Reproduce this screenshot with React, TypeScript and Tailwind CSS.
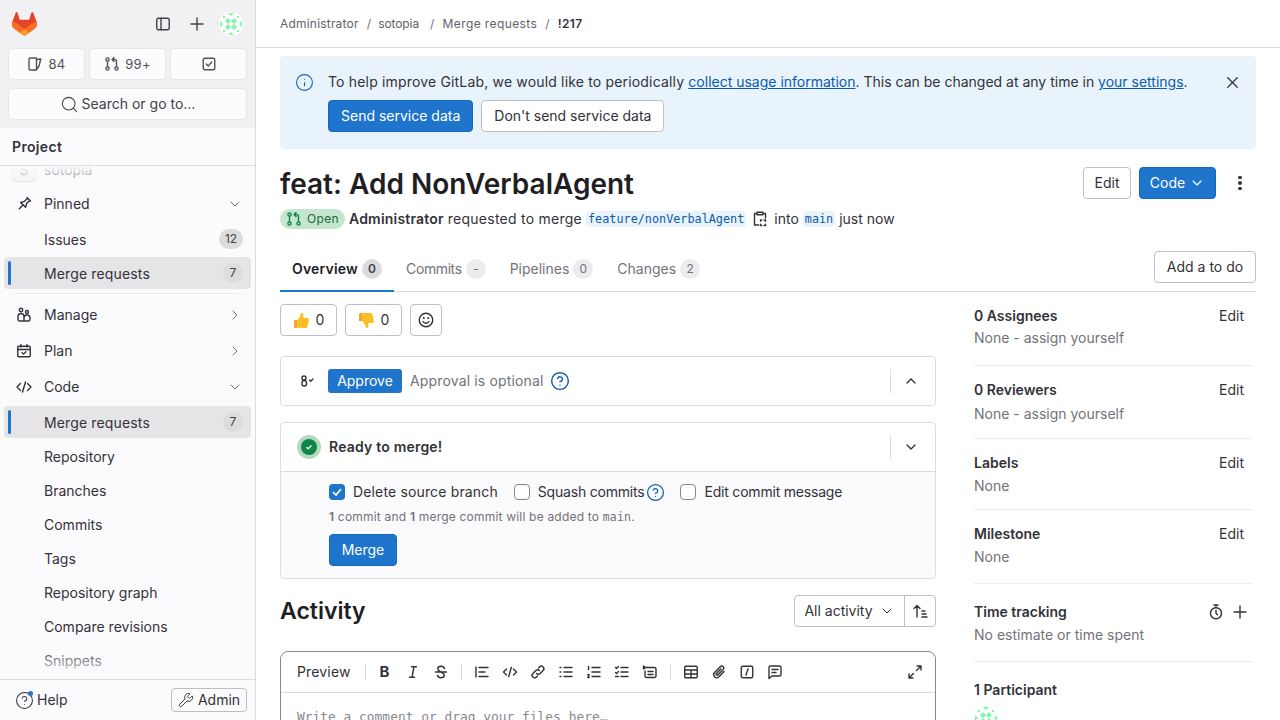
import type { ReactNode } from "react";
import { ChevronDown, ChevronRight, CircleHelp, Info, Search, Wrench, X } from "lucide-react";

const MONO = "font-['DejaVu_Sans_Mono',monospace]";

// 16px stroke icon, same grid as the GitLab icon set
const Ico = ({ children, className = "" }: { children: ReactNode; className?: string }) => (
  <svg viewBox="0 0 16 16" fill="none" stroke="currentColor" strokeWidth="1.4" strokeLinecap="round" strokeLinejoin="round" className={`h-4 w-4 shrink-0 ${className}`}>
    {children}
  </svg>
);

const MergeIcon = ({ className = "" }: { className?: string }) => (
  <Ico className={className}>
    <circle cx="3.5" cy="3.5" r="1.6" />
    <circle cx="3.5" cy="12.5" r="1.6" />
    <circle cx="12.5" cy="12.5" r="1.6" />
    <path d="M3.5 5.1v5.8M12.5 10.9V5.5a2 2 0 0 0-2-2H8M10 1.5l-2 2 2 2" />
  </Ico>
);

const PlusIcon = () => (
  <Ico>
    <path d="M8 2v12M2 8h12" />
  </Ico>
);

const Logo = () => (
  <svg viewBox="0 0 25 24" className="h-6 w-[25px]">
    <path d="m24.507 9.5-.034-.09L21.082.562a.896.896 0 0 0-1.694.091l-2.29 7.01H7.825L5.535.653a.898.898 0 0 0-1.694-.09L.451 9.411.416 9.5a6.297 6.297 0 0 0 2.09 7.278l.012.01.03.022 5.16 3.867 2.56 1.935 1.554 1.176a1.051 1.051 0 0 0 1.268 0l1.555-1.176 2.56-1.935 5.197-3.89.014-.01A6.297 6.297 0 0 0 24.507 9.5Z" fill="#E24329" />
    <path d="m24.507 9.5-.034-.09a11.44 11.44 0 0 0-4.56 2.051l-7.447 5.632 4.742 3.584 5.197-3.89.014-.01A6.297 6.297 0 0 0 24.507 9.5Z" fill="#FC6D26" />
    <path d="m7.707 20.677 2.56 1.935 1.555 1.176a1.051 1.051 0 0 0 1.268 0l1.555-1.176 2.56-1.935-4.743-3.584-4.755 3.584Z" fill="#FCA326" />
    <path d="M5.01 11.461a11.43 11.43 0 0 0-4.56-2.05L.416 9.5a6.297 6.297 0 0 0 2.09 7.278l.012.01.03.022 5.16 3.867 4.745-3.584-7.444-5.632Z" fill="#FC6D26" />
  </svg>
);

const Identicon = () => (
  <svg viewBox="0 0 24 24" className="h-6 w-6 shrink-0 rounded-full bg-white">
    <g fill="#7ff7a8">
      <path d="M9 6l3 3-3 3-3-3zM15 6l3 3-3 3-3-3zM9 12l3 3-3 3-3-3zM15 12l3 3-3 3-3-3z" />
      <path d="M9 1h6l-3 3zM9 23h6l-3-3zM1 9v6l3-3zM23 9v6l-3-3z" />
      <path d="M4 4h2v2H4zM18 4h2v2h-2zM4 18h2v2H4zM18 18h2v2h-2z" />
    </g>
  </svg>
);

const TopChip = ({ children }: { children: ReactNode }) => (
  <div className="flex h-8 flex-1 items-center justify-center gap-[5px] rounded border border-[#e6e6e9] bg-[#fbfafd] text-[13px] tracking-wide text-[#535158]">{children}</div>
);

const NavItem = ({ label, count, active }: { label: string; count?: number; active?: boolean }) => (
  <div className={`relative mx-1 mb-0.5 flex h-8 w-[247px] items-center justify-between rounded pl-10 pr-2 ${active ? "bg-[#e5e5e8]" : ""}`}>
    {active && <span className="absolute left-1 top-1 h-6 w-[3px] rounded bg-[#1f75cb]" />}
    <span className={`pt-px ${active ? "tracking-[0.14px]" : ""}`}>{label}</span>
    {count !== undefined && <span className={`flex h-5 items-center justify-center rounded-full bg-[#dcdcde] text-xs text-[#434248] ${count > 9 ? "w-6" : "w-5"}`}>{count}</span>}
  </div>
);

const NavSection = ({ icon, label, open, gap }: { icon: ReactNode; label: string; open?: boolean; gap: string }) => (
  <div className={`mx-1 flex h-8 w-[247px] items-center gap-3 px-3 pr-2 ${gap}`}>
    {icon}
    <span className="flex-1">{label}</span>
    {open ? <ChevronDown size={16} className="text-[#737278]" strokeWidth={1.5} /> : <ChevronRight size={16} className="text-[#737278]" strokeWidth={1.5} />}
  </div>
);

const Sidebar = () => (
  <aside className="flex h-[720px] w-64 shrink-0 flex-col border-r border-[#dcdcde] bg-[#fbfafd] text-sm text-[#333238]">
    <div className="flex h-32 shrink-0 flex-col bg-[#f1f1f3] px-2">
      <div className="flex h-12 shrink-0 items-center pl-1 pr-1">
        <Logo />
        <div className="ml-auto flex items-center gap-[18px] text-[#434248]">
          <Ico>
            <rect x="1.75" y="2.25" width="12.5" height="11.5" rx="1.5" />
            <path d="M6 2.25v11.5" />
          </Ico>
          <PlusIcon />
          <div className="-ml-1">
            <Identicon />
          </div>
        </div>
      </div>
      <div className="flex gap-1">
        <TopChip>
          <Ico>
            <path d="M2 3.25C2 2.5 2.5 2 3.25 2H9.5v12H3.25C2.5 14 2 13.5 2 12.75zM10 3.5 13.75 3 12 10l-2 3" />
          </Ico>
          84
        </TopChip>
        <TopChip>
          <MergeIcon />
          99+
        </TopChip>
        <TopChip>
          <Ico>
            <rect x="2.25" y="2.25" width="11.5" height="11.5" rx="1.5" />
            <path d="M5.25 8l2 2 3.5-4" />
          </Ico>
        </TopChip>
      </div>
      <div className="mt-2 flex h-8 items-center justify-center gap-[3px] rounded border border-[#e6e6e9] bg-[#fbfafd] text-[#434248]">
        <Search size={19} strokeWidth={1.3} />
        Search or go to…
      </div>
    </div>

    <div className="flex h-[38px] shrink-0 items-center border-b border-[#dcdcde] px-3 font-semibold tracking-wide">Project</div>

    <div className="relative flex-1 overflow-hidden">
      <div className="-mt-[12px]">
        <div className="mb-[2px] flex h-8 items-center gap-2 px-3">
          <span className="flex h-6 w-6 items-center justify-center rounded border border-[#dcdcde] bg-[#f1f1f3] text-[#737278]">S</span>
          <span>sotopia</span>
        </div>
        <NavSection
          label="Pinned"
          open
          gap="mb-[3px]"
          icon={
            <Ico className="rotate-45">
              <path d="M5.5 1.25h5M6.5 1.25v4.5l-2 3.5h7l-2-3.5v-4.5M8 9.25v5.5" />
            </Ico>
          }
        />
        <NavItem label="Issues" count={12} />
        <NavItem label="Merge requests" count={7} active />
        {/* margins collapse with the row above, so mt here is the whole gap */}
        <div className="mx-4 mb-[5px] mt-1 h-px bg-[#ececef]" />
        <NavSection
          label="Manage"
          gap="mb-1"
          icon={
            <Ico>
              <circle cx="5" cy="3" r="1.75" />
              <path d="M2 9.5a3 3 0 0 1 6 0V14H3.5A1.5 1.5 0 0 1 2 12.5zM8 14h4.5a1.5 1.5 0 0 0 1.5-1.5V11a3 3 0 0 0-6 0" />
              <circle cx="11" cy="5" r="1.5" />
            </Ico>
          }
        />
        <NavSection
          label="Plan"
          gap="mb-1"
          icon={
            <Ico>
              <rect x="1.75" y="3.25" width="12.5" height="10.5" rx="1" />
              <path d="M1.75 6.5h12.5M5 1.5v2.5M11 1.5v2.5M6 9.75l1.5 1.25L10 8.75" />
            </Ico>
          }
        />
        <NavSection
          label="Code"
          open
          gap="mb-[3px]"
          icon={
            <Ico>
              <path d="M4.5 4.5 1 8l3.5 3.5M11.5 4.5 15 8l-3.5 3.5M9.5 3l-3 10" />
            </Ico>
          }
        />
        <NavItem label="Merge requests" count={7} active />
        <NavItem label="Repository" />
        <NavItem label="Branches" />
        <NavItem label="Commits" />
        <NavItem label="Tags" />
        <NavItem label="Repository graph" />
        <NavItem label="Compare revisions" />
        <NavItem label="Snippets" />
      </div>
      <div className="absolute inset-x-0 top-0 h-6 bg-gradient-to-b from-[#fbfafd] to-transparent" />
      <div className="absolute inset-x-0 bottom-0 h-8 bg-gradient-to-t from-[#fbfafd] to-transparent" />
    </div>

    <div className="flex h-[41px] shrink-0 items-center justify-between border-t border-[#dcdcde] pl-4 pr-2">
      <div className="relative flex items-center gap-[3px]">
        <CircleHelp size={19} strokeWidth={1.3} className="-ml-px" />
        <span className="absolute left-[12px] top-[1px] h-[5px] w-[5px] rounded-full bg-[#1f75cb]" />
        Help
      </div>
      <div className="flex h-6 w-[76px] items-center justify-center gap-1 rounded border border-[#bfbfc3]">
        <Wrench size={16} strokeWidth={1.4} />
        Admin
      </div>
    </div>
  </aside>
);

const Btn = ({ children, primary, className = "" }: { children: ReactNode; primary?: boolean; className?: string }) => (
  <div className={`flex h-8 items-center justify-center rounded border px-3 ${primary ? "border-[#1068bf] bg-[#1f75cb] text-white" : "border-[#bfbfc3] bg-white text-[#333238]"} ${className}`}>{children}</div>
);

const Tab = ({ label, count, active, track = "" }: { label: string; count: string; active?: boolean; track?: string }) => (
  <div className={`-mb-px flex h-[44px] items-center gap-1 border-b-2 px-3 ${active ? "border-[#1f75cb] font-semibold text-[#1f1e24]" : "border-transparent text-[#737278]"}`}>
    <span className={track}>{label}</span>
    <span className={`flex h-5 w-5 items-center justify-center rounded-full text-xs ${active ? "bg-[#dcdcde] font-semibold text-[#434248]" : "bg-[#ececef] font-normal text-[#737278]"}`}>{count}</span>
  </div>
);

const Thumb = ({ down }: { down?: boolean }) => (
  <svg viewBox="0 0 16 16" className={`h-[17px] w-[17px] ${down ? "rotate-180 -scale-x-100" : ""}`}>
    <path d="M1 7.5h3.2V15H2.2A1.2 1.2 0 0 1 1 13.8z" fill="#f4a321" />
    <path d="M4.2 7.5 7.2 3V1.6C7.2.6 9.8.6 9.8 3v2.6h3.6c1.5 0 1.9 1.1 1.5 2.2L13.6 13.6c-.3 1-1 1.4-2 1.4H6c-1 0-1.8-.4-1.8-.8z" fill="#fbbf24" />
  </svg>
);

const ToolSep = ({ className = "mx-[6px]" }: { className?: string }) => <span className={`h-4 w-px bg-[#dcdcde] ${className}`} />;

const Tool = ({ children }: { children: ReactNode }) => <div className="flex h-7 w-7 items-center justify-center text-[#333238]">{children}</div>;

const Toolbar = () => (
  <div className="flex h-[41px] items-center border-b border-[#dcdcde] pl-2 pr-[12px]">
    <span className="px-2 tracking-[0.15px]">Preview</span>
    <ToolSep />
    <div className="-ml-px flex">
      <Tool><span className="text-[15px] font-bold">B</span></Tool>
      <Tool><Ico><path d="M6.5 2.75h5M4.5 13.25h5M9 2.75l-2 10.5" /></Ico></Tool>
      <Tool><Ico><path d="M11.5 4.5C11 3 9.8 2.25 8 2.25c-2 0-3.25 1-3.25 2.5S6 7 8 8s3.25 1.75 3.25 3.25S10 13.75 8 13.75c-1.8 0-3-.75-3.5-2.25M2.5 8h11" /></Ico></Tool>
    </div>
    <ToolSep />
    <Tool><Ico><path d="M2 3v10M5 3.5h9M5 8h6M5 12.5h9" /></Ico></Tool>
    <Tool><Ico><path d="M4.5 5 1.5 8l3 3M11.5 5l3 3-3 3M9.3 3.5l-2.6 9" /></Ico></Tool>
    <Tool><Ico><path d="M6.5 9.5a2.5 2.5 0 0 0 3.6 0l3-3a2.5 2.5 0 0 0-3.6-3.6l-1 1M9.5 6.5a2.5 2.5 0 0 0-3.6 0l-3 3a2.5 2.5 0 0 0 3.6 3.6l1-1" /></Ico></Tool>
    <Tool><Ico><path d="M6 3.5h8M6 8h8M6 12.5h8M2 3.5h1M2 8h1M2 12.5h1" /></Ico></Tool>
    <Tool><Ico><path d="M6 3.5h8M6 8h8M6 12.5h8M2.5 2.5v3M1.75 10.75h1.5L1.75 13.5h1.5" /></Ico></Tool>
    <Tool><Ico><path d="M7 3.5h7M7 8h7M7 12.5h7M1.5 3.5l1 1 2-2M1.5 8.5l1 1 2-2M1.5 12.5h3" /></Ico></Tool>
    <Tool><Ico><path d="M3.5 3.5h9a1.5 1.5 0 0 1 1.5 1.5v7a1.5 1.5 0 0 1-1.5 1.5h-8A1.5 1.5 0 0 1 3 12V7M6 7.5h5M6 10.5h5" /><path d="M1.5 2v3l2-1.5z" fill="currentColor" /></Ico></Tool>
    <ToolSep />
    <Tool><Ico><rect x="1.75" y="2.25" width="12.5" height="11.5" rx="1" /><path d="M1.75 6h12.5M1.75 10h12.5M8 6v7.75" /></Ico></Tool>
    <Tool><Ico><path d="M13 7.5l-5 5.3a3 3 0 0 1-4.4-4.2l5.6-5.9a2 2 0 0 1 3 2.7L6.8 11a1 1 0 0 1-1.5-1.3L10 4.7" /></Ico></Tool>
    <Tool><Ico><rect x="2.25" y="2.25" width="11.5" height="11.5" rx="1.5" /><path d="M9 5l-2 6" /></Ico></Tool>
    <Tool><Ico><path d="M2 3.5A1.5 1.5 0 0 1 3.5 2h9A1.5 1.5 0 0 1 14 3.5v7a1.5 1.5 0 0 1-1.5 1.5H5l-3 2.5zM5 5.5h6M5 8.5h4" /></Ico></Tool>
    <div className="ml-auto">
      <Ico><path d="M9.5 6.5 14 2M10 2h4v4M6.5 9.5 2 14M6 14H2v-4" /></Ico>
    </div>
  </div>
);

const Side = ({ title, sub, wrap, subGap }: { title: string; sub: string; wrap: string; subGap: string }) => (
  <div className={`border-b border-[#ececef] ${wrap}`}>
    <div className="flex h-6 items-center justify-between pr-2">
      <span className="font-semibold text-[#333238]">{title}</span>
      <span className="text-[#333238]">Edit</span>
    </div>
    <div className={`h-5 text-[#737278] ${subGap}`}>{sub}</div>
  </div>
);

const Mr = () => (
  <div className="flex min-w-0 gap-[38px]">
    <div className="w-[656px] shrink-0">
      <div className="mt-3 flex gap-2">
        <Btn className="w-[57px] gap-1.5 !px-0"><Thumb /> 0</Btn>
        <Btn className="w-[57px] gap-1.5 !px-0"><Thumb down /> 0</Btn>
        <Btn className="w-8 !px-0">
          <Ico>
            <circle cx="8" cy="8" r="6.75" />
            <path d="M5 9.5c.7 1.2 1.7 1.75 3 1.75s2.3-.55 3-1.75" />
            <path d="M5.75 6h.01M10.25 6h.01" strokeWidth="2" />
          </Ico>
        </Btn>
      </div>

      <div className="mt-5 flex h-[50px] items-center rounded border border-[#dcdcde] pl-[17px] pr-[16px]">
        <Ico className="mr-[12px] w-[18px]">
          <circle cx="5" cy="5" r="2" />
          <rect x="3" y="7.5" width="4.5" height="5.5" rx="2.25" />
          <path d="M10.5 7l1.2 1.2L14 6" />
        </Ico>
        <span className="flex h-6 w-[74px] items-center justify-center rounded-[3px] bg-[#1f75cb] text-white">Approve</span>
        <span className="ml-2 tracking-[0.15px] text-[#737278]">Approval is optional</span>
        <CircleHelp size={20} strokeWidth={1.7} className="ml-[6px] text-[#0b5cad]" />
        <span className="ml-auto h-6 border-l border-[#dcdcde]" />
        <ChevronDown size={16} strokeWidth={2} className="ml-3 rotate-180" />
      </div>

      <div className="mt-4 overflow-hidden rounded border border-[#dcdcde]">
        <div className="flex h-[49px] items-center border-b border-[#dcdcde] pl-4 pr-[16px]">
          <span className="flex h-6 w-6 items-center justify-center rounded-full bg-[#b4d8c0]">
            <span className="flex h-4 w-4 items-center justify-center rounded-full bg-[#108548]">
              <svg viewBox="0 0 8 8" className="h-2 w-2"><path d="M1.5 4.2 3.2 5.8 6.5 2.4" fill="none" stroke="white" strokeWidth="1.3" /></svg>
            </span>
          </span>
          <span className="ml-2 font-semibold tracking-[0.2px] text-[#333238]">Ready to merge!</span>
          <span className="ml-auto h-6 border-l border-[#dcdcde]" />
          <ChevronDown size={16} strokeWidth={2} className="ml-3" />
        </div>
        <div className="h-[106px] bg-[#fbfafd] pl-12 pt-2">
          <div className="flex h-[24px] items-center">
            <span className="flex h-4 w-4 items-center justify-center rounded bg-[#1f75cb]">
              <svg viewBox="0 0 16 16" className="h-4 w-4"><path d="M4 8.2 7 11l5-6" fill="none" stroke="white" strokeWidth="1.7" /></svg>
            </span>
            <span className="ml-2 tracking-[0.15px]">Delete source branch</span>
            <span className="ml-4 h-4 w-4 rounded border border-[#89888d] bg-white" />
            <span className="ml-2 tracking-[-0.2px]">Squash commits</span>
            <CircleHelp size={19} strokeWidth={1.6} className="ml-[2px] text-[#0b5cad]" />
            <span className="ml-[15px] h-4 w-4 rounded border border-[#89888d] bg-white" />
            <span className="ml-2 tracking-[-0.2px]">Edit commit message</span>
          </div>
          <p className="mt-1 h-[18px] text-xs leading-[18px] tracking-[0.2px] text-[#737278]">
            <b className="font-semibold">1</b> commit and <b className="font-semibold">1</b> merge commit will be added to <code className={`${MONO} text-[11.5px]`}>main</code>.
          </p>
          <Btn primary className="mt-2 w-[68px] !px-0">Merge</Btn>
        </div>
      </div>

      <div className="mt-4 flex h-8 items-center justify-between">
        <h2 className="text-[23px] font-semibold text-[#1f1e24]">Activity</h2>
        <div className="flex h-8">
          <div className="flex w-[111px] items-center justify-center gap-1.5 rounded-l border border-[#bfbfc3]">
            All activity
            <ChevronDown size={16} strokeWidth={1.5} />
          </div>
          <div className="-ml-px flex w-[32px] items-center justify-center rounded-r border border-[#bfbfc3]">
            <Ico><path d="M5 14V2.5M2 5.5l3-3 3 3M10 8h3M10 11h4M10 14h5" /></Ico>
          </div>
        </div>
      </div>

      <div className="mt-6 rounded-lg border border-[#89888d]">
        <Toolbar />
        <div className={`h-[60px] px-4 pt-[14px] text-[12.9px] leading-5 text-[#89888d] ${MONO}`}>Write a comment or drag your files here…</div>
      </div>
    </div>

    <div className="w-[278px] shrink-0">
      <Side title="0 Assignees" sub="None - assign yourself" wrap="pt-3 pb-[17px]" subGap="mt-0" />
      <Side title="0 Reviewers" sub="None - assign yourself" wrap="pt-3 pb-[14px]" subGap="mt-0.5" />
      <Side title="Labels" sub="None" wrap="pt-3 pb-[13px]" subGap="mt-px" />
      <Side title="Milestone" sub="None" wrap="pt-3 pb-[16px]" subGap="mt-px" />
      <div className="border-b border-[#ececef] pt-4 pb-[16px]">
        <div className="flex h-6 items-center justify-between pr-1">
          <span className="font-semibold text-[#333238]">Time tracking</span>
          <div className="flex gap-2">
            <Ico><circle cx="8" cy="9.25" r="5.5" /><path d="M6 1h4M8 1v2.5M8 6.5v2.75l1.5 1.5" /></Ico>
            <PlusIcon />
          </div>
        </div>
        <div className="mt-px h-5 text-[#737278]">No estimate or time spent</div>
      </div>
      <div className="pt-4">
        <div className="flex h-6 items-center font-semibold text-[#333238]">1 Participant</div>
        <div className="mt-1"><Identicon /></div>
      </div>
    </div>
  </div>
);

export default function App() {
  return (
    <div className="flex h-[720px] w-[1280px] overflow-hidden bg-white font-['Inter','Noto_Sans',sans-serif] text-sm text-[#333238]">
      <Sidebar />
      <main className="min-w-0 flex-1">
        <div className="flex h-12 items-center gap-2 border-b border-[#dcdcde] px-6 text-xs tracking-[0.2px] text-[#626168]">
          <span>Administrator</span>
          <span className="text-[#737278]">/</span>
          <span className="-ml-px tracking-[-0.1px]">sotopia</span>
          <span className="ml-[3px] text-[#737278]">/</span>
          <span className="tracking-[0.4px]">Merge requests</span>
          <span className="text-[#737278]">/</span>
          <span className="font-semibold tracking-[0.3px] text-[#333238]">!217</span>
        </div>

        <div className="px-6">
          <div className="mt-2 flex h-[93px] rounded bg-[#e9f3fc] pl-4 pr-4 pt-4">
            <Info size={19} strokeWidth={1.4} className="-ml-px mt-[1px] text-[#1068bf]" />
            <div className="ml-[6px] flex-1 pl-2">
              <p className="h-5 leading-5">
                <span className="tracking-[0.17px]">To help improve GitLab, we would like to periodically </span>
                <span className="text-[#0b5cad] underline">collect usage information</span>. This can be changed at any time in <span className="text-[#0b5cad] underline">your settings</span>.
              </p>
              <div className="mt-2 flex gap-2">
                <Btn primary>Send service data</Btn>
                <Btn>Don't send service data</Btn>
              </div>
            </div>
            <X size={19} strokeWidth={1.5} className="-mr-0.5 mt-[1px]" />
          </div>

          <div className="mt-[18px] flex h-8 items-center justify-between">
            <h1 className="pt-[2px] text-[28px] font-semibold text-[#1f1e24]">feat: Add NonVerbalAgent</h1>
            <div className="flex items-center gap-2">
              <Btn className="w-12 !px-0">Edit</Btn>
              <Btn primary className="w-[77px] gap-1 !px-0">
                Code
                <ChevronDown size={16} strokeWidth={1.75} />
              </Btn>
              <div className="flex w-8 flex-col items-center gap-[2px]">
                <span className="h-[3.5px] w-[3.5px] rounded-full bg-[#333238]" />
                <span className="h-[3.5px] w-[3.5px] rounded-full bg-[#333238]" />
                <span className="h-[3.5px] w-[3.5px] rounded-full bg-[#333238]" />
              </div>
            </div>
          </div>

          <div className="mt-[10px] flex h-5 items-center">
            <span className="flex h-5 w-[65px] items-center justify-center gap-[5px] rounded-full bg-[#c3e6cd] text-xs tracking-[0.3px] text-[#24663b]">
              <MergeIcon className="text-[#108548]" />
              Open
            </span>
            <b className="ml-1 font-semibold tracking-[0.2px]">Administrator</b>
            <span className="ml-1 tracking-[0.25px]">requested to merge</span>
            <code className={`ml-1 rounded bg-[#e9f3fc] px-[2px] text-[11.8px] text-[#0b5cad] ${MONO}`}>feature/nonVerbalAgent</code>
            <Ico className="ml-[6px]">
              <path d="M4.5 2.5H2.5v11.5h4M11.5 2.5h2V7M5 1.25h6v2.5H5zM8.5 9h1.25M12 9h1.5v1.25M8.5 14.5h1.25M12 14.5h1.5v-1.25M8.5 9v1.25M8.5 13.25v1.25" />
            </Ico>
            <span className="ml-[6px]">into</span>
            <code className={`ml-1 rounded bg-[#e9f3fc] px-[2px] text-[11.8px] text-[#0b5cad] ${MONO}`}>main</code>
            <span className="ml-1">just now</span>
          </div>

          <div className="mt-[19px] flex h-[44px] items-center justify-between border-b border-[#dcdcde]">
            <div className="flex">
              <Tab label="Overview" count="0" active track="tracking-[0.2px]" />
              <Tab label="Commits" count="-" track="tracking-[-0.4px]" />
              <Tab label="Pipelines" count="0" />
              <Tab label="Changes" count="2" />
            </div>
            <Btn className="mb-[6px] w-[102px] !px-0">Add a to do</Btn>
          </div>

          <Mr />
        </div>
      </main>
    </div>
  );
}
